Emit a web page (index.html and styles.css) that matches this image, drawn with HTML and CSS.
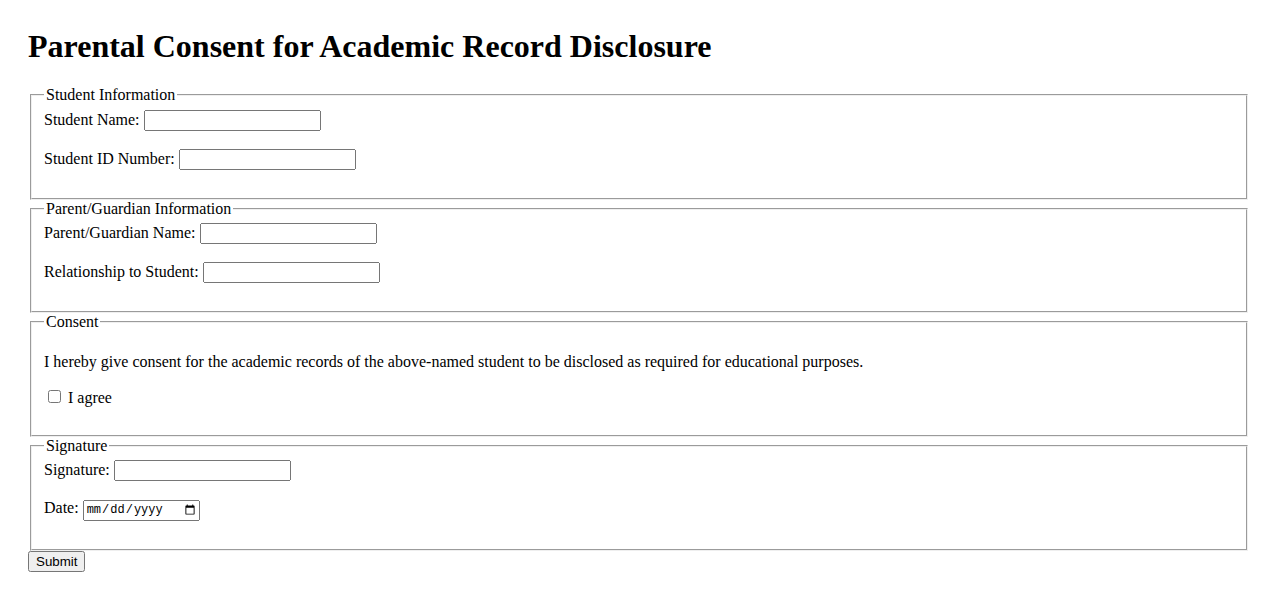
FILE: index.html
```html
<!DOCTYPE html>
<html lang="en">
<head>
<meta charset="utf-8"/>
<meta content="width=device-width, initial-scale=1.0" name="viewport"/>
<title>Parental Consent for Academic Record Disclosure</title>
<link rel="stylesheet" href="styles.css">
</head>
<body>
<h1>Parental Consent for Academic Record Disclosure</h1>
<form id="consentForm">
<fieldset>
<legend>Student Information</legend>
<div class="row">
<label for="studentName">Student Name:</label>
<input id="studentName" name="studentName" type="text"/>
</div>
<div class="row">
<label for="studentId">Student ID Number:</label>
<input id="studentId" name="studentId" type="text"/>
</div>
</fieldset>
<fieldset>
<legend>Parent/Guardian Information</legend>
<div class="row">
<label for="parentName">Parent/Guardian Name:</label>
<input id="parentName" name="parentName" type="text"/>
</div>
<div class="row">
<label for="relationship">Relationship to Student:</label>
<input id="relationship" name="relationship" type="text"/>
</div>
</fieldset>
<fieldset>
<legend>Consent</legend>
<p>I hereby give consent for the academic records of the above-named student to be disclosed as required for educational purposes.</p>
<div class="row">
<input id="agree" name="agree" type="checkbox"/>
<label for="agree">I agree</label>
</div>
</fieldset>
<fieldset>
<legend>Signature</legend>
<div class="row">
<label for="signature">Signature:</label>
<input id="signature" name="signature" type="text"/>
</div>
<div class="row">
<label for="date">Date:</label>
<input id="date" name="date" type="date"/>
</div>
</fieldset>
<button type="submit">Submit</button>
</form>
</body>
</html>
```
FILE: styles.css
```css
body {
  font-family: "Liberation Serif", "Times New Roman", serif;
  margin: 8px;
  padding: 20px;
  color: #000;
  background: #fff;
}
h1 {
  font-size: 32px;
  margin: 0 0 21px;
}
fieldset {
  margin: 0 2px;
}
legend {
  padding: 0 2px;
}
.row {
  margin-bottom: 18px;
}
input, button {
  font-family: "Liberation Sans", Arial, sans-serif;
}
input[type="text"] {
  box-sizing: border-box;
  width: 177px;
  height: 21px;
}
input[type="date"] {
  box-sizing: border-box;
  width: 117px;
  height: 21px;
  font-family: "Liberation Mono", "Courier New", monospace;
  font-size: 12px;
}
```
